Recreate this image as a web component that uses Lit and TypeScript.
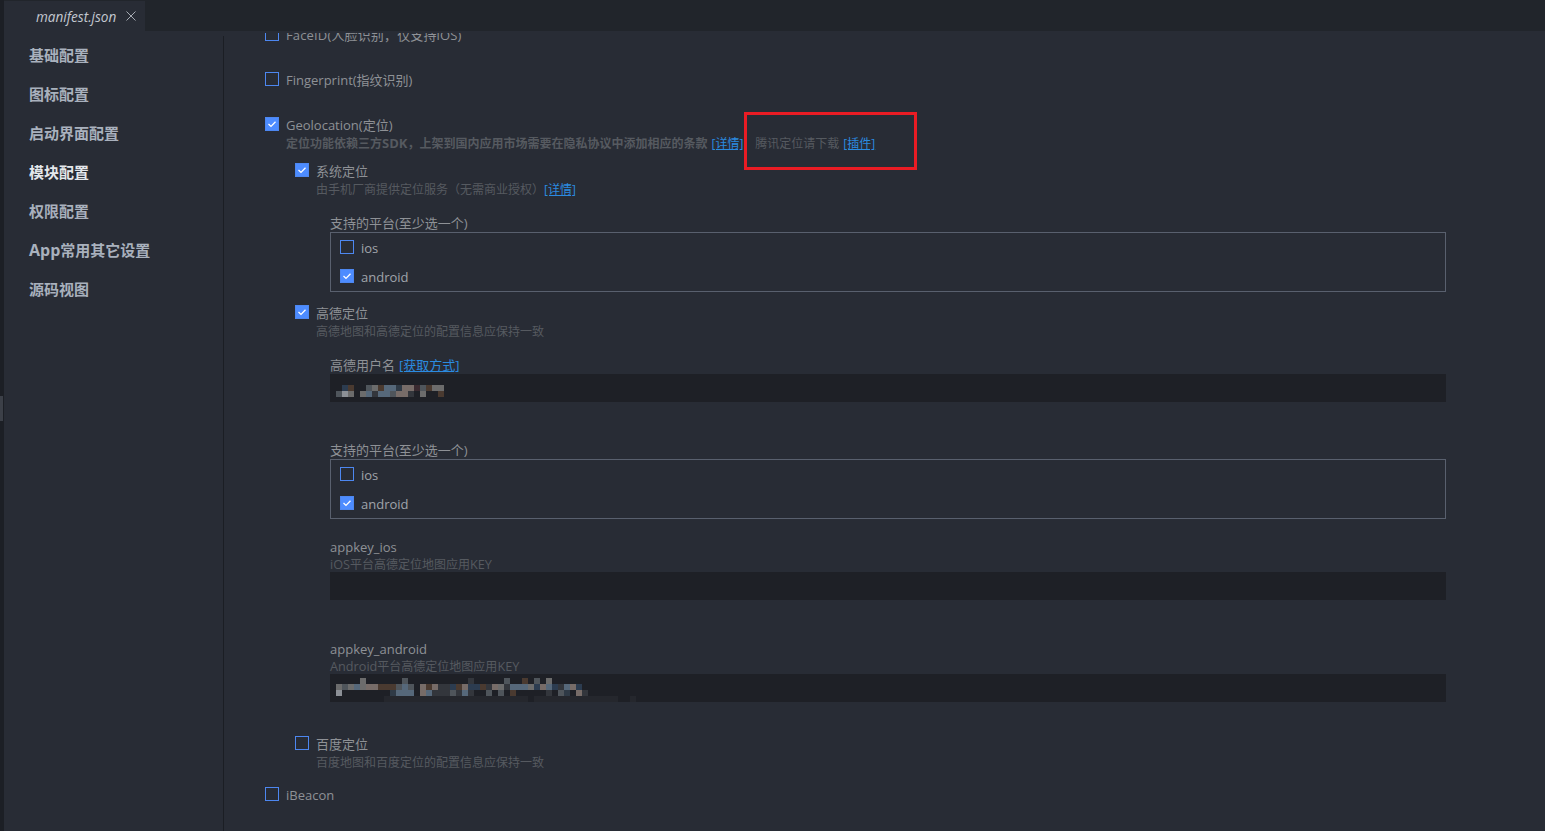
import { LitElement, html, css, nothing } from 'lit';
import { customElement } from 'lit/decorators.js';

const NAV = ['基础配置', '图标配置', '启动界面配置', '模块配置', '权限配置', 'App常用其它设置', '源码视图'];

// mosaic colours for the blurred-out values, one letter per 6px cell
const PALETTE: Record<string, string> = {
  a: '#2f3a46',
  b: '#4f555b',
  c: '#6c6c6c',
  d: '#8c9096',
  e: '#4a3a30',
  f: '#2c3c50',
  g: '#56687a',
  h: '#776c68',
  i: '#33363c',
  j: '#3a2a30',
  k: '#25272d',
};

const USER_MOSAIC = [
  '.fe..bceggahhjbecc',
  'bdc.cgiggbhhi.c..e',
];

const ANDROID_MOSAIC = [
  '....c......b..........i.....b..e.b.c',
  'cbcgchheeebgb.hehiifehffeihcigggcfhgfighf',
  'd........aggg.hgiiibigi..b.b.e.....i.ba.hi',
  '........kkkkkkkkkkkkkkkkkkkkkkkk.kkkkkkkkkkkkkk..k',
];

@customElement('app-root')
export class AppRoot extends LitElement {
  static styles = css`
    :host {
      display: flex;
      width: 1545px;
      height: 831px;
      overflow: hidden;
      position: relative;
      background: #282c35;
      color: #8e9196;
      font-family: 'Open Sans', 'Noto Sans CJK SC', sans-serif;
      font-size: 13px;
    }
    .strip {
      width: 4px;
      flex: none;
      background: #1c1f25;
      display: flex;
      flex-direction: column;
      padding-top: 396px;
      box-sizing: border-box;
    }
    .strip i {
      display: block;
      width: 3px;
      height: 25px;
      background: #3c4048;
    }
    .body {
      flex: 1;
      min-width: 0;
      display: flex;
      flex-direction: column;
    }
    .tabs {
      height: 31px;
      flex: none;
      box-sizing: border-box;
      padding-top: 1px;
      background: #21252b;
      display: flex;
    }
    .tab {
      width: 141px;
      box-sizing: border-box;
      padding-left: 32px;
      background: #282c35;
      display: flex;
      align-items: center;
      gap: 10px;
      color: #c3c8d0;
      font-size: 13.6px;
      font-style: italic;
    }
    .tab svg { flex: none; }
    .main {
      flex: 1;
      min-height: 0;
      display: flex;
    }
    .nav {
      width: 220px;
      flex: none;
      margin-top: 5px;
      box-sizing: border-box;
      padding-left: 25px;
      border-right: 1px solid #1b1e24;
    }
    .nav div {
      height: 39px;
      line-height: 39px;
      font-size: 15px;
      font-weight: 700;
      color: #a9b1bd;
    }
    .nav div.on { color: #e4e7eb; }
    .nav .lat { font-size: 16px; }
    .scroll {
      flex: 1;
      min-width: 0;
      margin-top: 2px;
      overflow: hidden;
    }
    .form {
      margin-top: -7px;
      padding-left: 41px;
      width: 1181px;
      box-sizing: content-box;
    }
    .row {
      display: flex;
      gap: 7px;
      line-height: 18px;
    }
    .row + .row { margin-top: 27px; }
    .row.wide { letter-spacing: 0.15px; }
    .box {
      width: 14px;
      height: 14px;
      flex: none;
      box-sizing: border-box;
      margin-top: 1px;
      border: 1px solid #4d87f0;
      display: flex;
    }
    .box.on { background: #4d8cff; }
    .desc {
      height: 16px;
      font-size: 12px;
      line-height: 16px;
      color: #565a60;
    }
    .row .desc { margin-top: 2px; }
    .row.geo .desc { margin-top: 1px; }
    .desc b { font-weight: 700; }
    .desc .lat { font-size: 13px; }
    .field .desc .lat { font-size: 12.7px; }
    .desc .extra { margin-left: 12px; }
    a {
      color: #2b8be0;
      text-decoration: underline;
      margin-left: 4px;
    }
    .desc a.tight { margin-left: 0; }
    .sub { margin-left: 30px; }
    .row.sub.gap11 { margin-top: 11px; }
    .row.sub.gap12 { margin-top: 12px; }
    .row.sub.gap33 { margin-top: 33px; }
    .row.iBeacon { margin-top: 15px; }
    .field {
      margin-left: 65px;
      width: 1116px;
      line-height: 18px;
    }
    .field.m16 { margin-top: 16px; }
    .field.m19 { margin-top: 19px; }
    .field.m39 { margin-top: 39px; }
    .field.m40 { margin-top: 40px; }
    .panel {
      height: 60px;
      box-sizing: border-box;
      border: 1px solid #59606e;
      padding: 6px 0 0 9px;
    }
    .panel .row + .row { margin-top: 11px; }
    .panel .row { color: #a0a4aa; }
    .input {
      height: 28px;
      background: #1e2026;
      box-sizing: border-box;
      padding: 11px 0 0 6px;
    }
    .input.tall { padding-top: 4px; }
    .line { display: flex; height: 6px; }
    .line span { width: 6px; height: 6px; flex: none; }
    .mark {
      position: absolute;
      left: 744px;
      top: 112px;
      width: 173px;
      height: 58px;
      box-sizing: border-box;
      border: 3px solid #ea1c24;
    }
  `;

  private _box(on: boolean) {
    return html`<span class="box ${on ? 'on' : ''}">
      ${on
        ? html`<svg width="12" height="12" viewBox="0 0 12 12" fill="none">
            <path d="M2.5 6 L5 8.4 L9.5 3.8" stroke="#fff" stroke-width="1.3" />
          </svg>`
        : nothing}
    </span>`;
  }

  private _row(label: string, on: boolean, desc?: unknown, cls = '') {
    return html`<div class="row ${cls}">
      ${this._box(on)}
      <div>
        <div>${label}</div>
        ${desc ? html`<div class="desc">${desc}</div>` : nothing}
      </div>
    </div>`;
  }

  private _platforms(cls: string) {
    return html`<div class="field ${cls}">
      <div>支持的平台(至少选一个)</div>
      <div class="panel">
        ${this._row('ios', false)}
        ${this._row('android', true)}
      </div>
    </div>`;
  }

  private _mosaic(rows: string[]) {
    return rows.map(
      (r) => html`<div class="line">
        ${[...r].map((c) => html`<span style="background:${PALETTE[c] ?? 'transparent'}"></span>`)}
      </div>`
    );
  }

  private _navItem(n: string) {
    const label = n.startsWith('App') ? html`<span class="lat">App</span>${n.slice(3)}` : n;
    return html`<div class=${n === '模块配置' ? 'on' : ''}>${label}</div>`;
  }

  render() {
    return html`
      <div class="strip"><i></i></div>
      <div class="body">
        <div class="tabs">
          <div class="tab">
            <span>manifest.json</span>
            <svg width="10" height="10" viewBox="0 0 10 10">
              <path d="M0.5 0.5 L9.5 9.5 M9.5 0.5 L0.5 9.5" stroke="#a6abb3" stroke-width="1" />
            </svg>
          </div>
        </div>
        <div class="main">
          <div class="nav">${NAV.map((n) => this._navItem(n))}</div>
          <div class="scroll">
            <div class="form">
              ${this._row('FaceID(人脸识别，仅支持iOS)', false, undefined, 'wide')}
              ${this._row('Fingerprint(指纹识别)', false)}
              ${this._row(
                'Geolocation(定位)',
                true,
                html`<b>定位功能依赖三方<span class="lat">SDK</span>，上架到国内应用市场需要在隐私协议中添加相应的条款</b><a>[详情]</a><span class="extra">腾讯定位请下载</span><a>[插件]</a>`,
                'geo'
              )}
              ${this._row(
                '系统定位',
                true,
                html`由手机厂商提供定位服务（无需商业授权）<a class="tight">[详情]</a>`,
                'sub gap11'
              )}
              ${this._platforms('m16')}
              ${this._row('高德定位', true, '高德地图和高德定位的配置信息应保持一致', 'sub gap12')}
              <div class="field m16">
                <div>高德用户名<a>[获取方式]</a></div>
                <div class="input">${this._mosaic(USER_MOSAIC)}</div>
              </div>
              ${this._platforms('m39')}
              <div class="field m19">
                <div>appkey_ios</div>
                <div class="desc"><span class="lat">iOS</span>平台高德定位地图应用<span class="lat">KEY</span></div>
                <div class="input"></div>
              </div>
              <div class="field m40">
                <div>appkey_android</div>
                <div class="desc"><span class="lat">Android</span>平台高德定位地图应用<span class="lat">KEY</span></div>
                <div class="input tall">${this._mosaic(ANDROID_MOSAIC)}</div>
              </div>
              ${this._row('百度定位', false, '百度地图和百度定位的配置信息应保持一致', 'sub gap33')}
              ${this._row('iBeacon', false, undefined, 'iBeacon')}
            </div>
          </div>
        </div>
      </div>
      <div class="mark"></div>
    `;
  }
}
